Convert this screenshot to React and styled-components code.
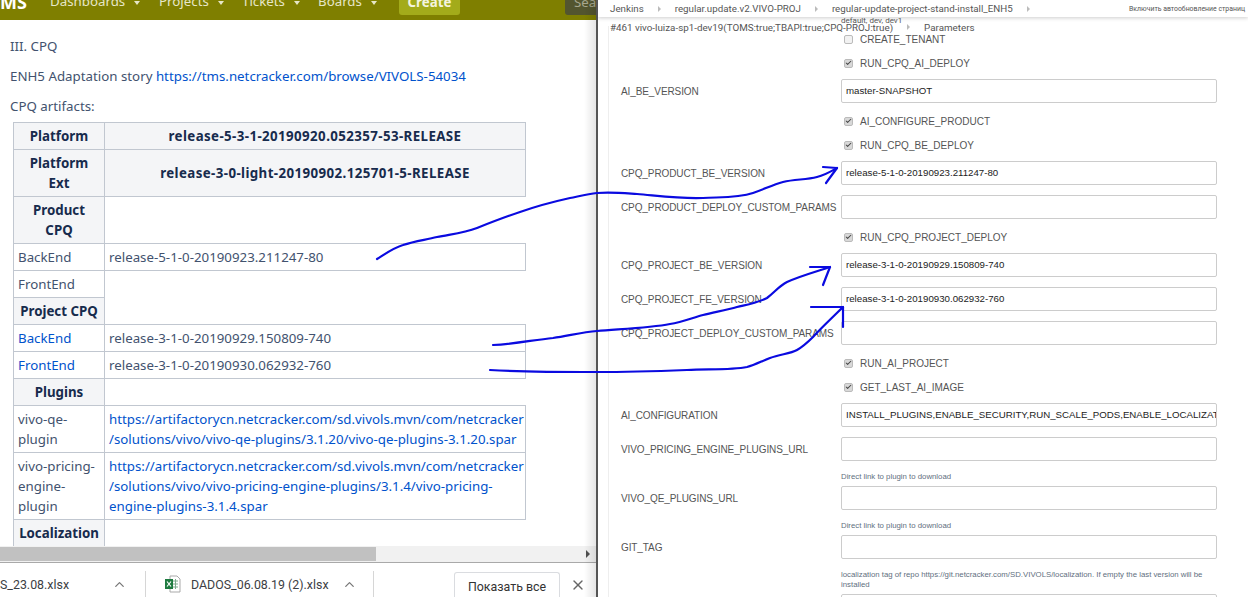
import React from 'react';
import styled, { createGlobalStyle } from 'styled-components';
import { ChevronUp, X, Check } from 'lucide-react';

const Global = createGlobalStyle`
  html, body { margin: 0; padding: 0; background: #fff; }
  body { width: 1248px; height: 597px; overflow: hidden; }
`;

const Page = styled.div`
  position: relative;
  display: flex;
  width: 1248px;
  height: 597px;
  overflow: hidden;
  font-family: "Noto Sans", "Open Sans", sans-serif;
`;

const LeftWindow = styled.div`
  display: flex;
  flex-direction: column;
  width: 596px;
  height: 597px;
  flex: none;
  position: relative;
`;

const Shade = styled.div`
  position: absolute;
  top: 0;
  right: 0;
  bottom: 0;
  width: 12px;
  background: linear-gradient(to right, rgba(0,0,0,0), rgba(0,0,0,0.1));
  pointer-events: none;
`;

const Header = styled.div`
  display: flex;
  align-items: flex-end;
  height: 20px;
  flex: none;
  background: #7f7f00;
  overflow: hidden;
  color: #e6e6c8;
  font-size: 13.3px;
`;

const Logo = styled.span`
  width: 50px;
  flex: none;
  height: 20px;
  line-height: 4px;
  font-weight: 700;
  font-size: 18px;
  color: #fff;
`;

const NavItem = styled.span`
  display: flex;
  align-items: center;
  gap: 9px;
  width: ${(p) => p.$w}px;
  flex: none;
  height: 20px;
  white-space: nowrap;
  & > span { position: relative; top: -9px; }
`;

const Caret = styled.i`
  position: relative;
  top: -7px;
  width: 0;
  height: 0;
  border-left: 3.5px solid transparent;
  border-right: 3.5px solid transparent;
  border-top: 4px solid #e6e6c8;
`;

const CreateButton = styled.span`
  width: 61px;
  flex: none;
  height: 15px;
  margin-bottom: 5px;
  background: #a3ab1a;
  border-radius: 0 0 3px 3px;
  color: #f4f4df;
  font-weight: 700;
  line-height: 4px;
  text-align: center;
`;

const SearchBox = styled.span`
  margin-left: 105px;
  width: 40px;
  flex: none;
  height: 15px;
  margin-bottom: 5px;
  background: #53552f;
  border-radius: 0 0 0 3px;
  color: #a7a78e;
  line-height: 4px;
  padding-left: 9px;
`;

const Content = styled.div`
  flex: 1;
  min-height: 0;
  overflow: hidden;
  padding: 16px 0 0 10px;
  font-size: 13.3px;
  line-height: 20px;
  color: #42526e;
`;

const Para = styled.p`
  margin: 0 0 10px;
  &:last-of-type { margin-bottom: 6px; }
`;

const Link = styled.a`
  color: #0052cc;
  text-decoration: none;
`;

const Sheet = styled.table`
  margin: 0 0 0 3px;
  width: 512px;
  border-collapse: collapse;
  table-layout: fixed;
  line-height: 20px;
  color: #42526e;
`;

const Head = styled.th`
  padding: 3px 4px;
  border: 1px solid #c1c7d0;
  background: #f4f5f7;
  color: #172b4d;
  font-weight: 700;
  text-align: center;
  letter-spacing: ${(p) => (p.$wide ? '0.4px' : '0')};
`;

const Cell = styled.td`
  padding: 3px 4px;
  border: 1px solid #c1c7d0;
`;

const Blank = styled.td`
  border: none;
  border-bottom: ${(p) => (p.$last ? '1px solid #c1c7d0' : 'none')};
`;

const ScrollBar = styled.div`
  display: flex;
  align-items: center;
  flex: none;
  height: 16px;
  background: #f1f1f1;
  border-bottom: 1px solid #a9a9a9;
`;

const Thumb = styled.div`
  width: 376px;
  height: 14px;
  background: #c1c1c1;
`;

const ScrollArrow = styled.i`
  margin-left: auto;
  margin-right: 6px;
  width: 0;
  height: 0;
  border-top: 4px solid transparent;
  border-bottom: 4px solid transparent;
  border-left: 4px solid #505050;
`;

const Downloads = styled.div`
  display: flex;
  align-items: flex-end;
  flex: none;
  height: 34px;
  background: #fff;
  font-family: "Roboto", "Noto Sans", sans-serif;
  font-size: 12.4px;
  color: #3c4043;
`;

const DownloadItem = styled.div`
  display: flex;
  align-items: center;
  width: ${(p) => p.$w}px;
  flex: none;
  height: 26px;
  padding-left: ${(p) => p.$pad}px;
  border-right: 1px solid #d6d6d6;
  box-sizing: border-box;
  white-space: nowrap;
  & > svg:last-child { margin-left: auto; margin-right: ${(p) => p.$tail}px; color: #777; }
`;

const FileName = styled.span`
  margin-left: ${(p) => p.$gap}px;
`;

const ShowAll = styled.div`
  margin-left: 80px;
  width: 106px;
  height: 25px;
  flex: none;
  box-sizing: border-box;
  border: 1px solid #dadce0;
  border-bottom: none;
  border-radius: 3px 3px 0 0;
  text-align: center;
  line-height: 27px;
  color: #333;
`;

const CloseSlot = styled.div`
  display: flex;
  align-items: center;
  margin-left: 10px;
  height: 25px;
  color: #666;
`;

const RightWindow = styled.div`
  position: relative;
  flex: 1;
  height: 597px;
  overflow: hidden;
  box-sizing: border-box;
  border-left: 2px solid #555;
  background: #fff;
  font-family: "Roboto", "Liberation Sans", sans-serif;
  color: #555;
`;

const TopCrumbs = styled.div`
  display: flex;
  align-items: center;
  height: 17px;
  padding-left: 12px;
  font-size: 9.75px;
  background: #fff;
  box-shadow: 0 1px 4px rgba(0, 0, 0, 0.2);
  position: relative;
  z-index: 1;
`;

const Crumb = styled.span`
  white-space: nowrap;
`;

const CrumbArrow = styled.i`
  flex: none;
  margin: 0 14px;
  width: 0;
  height: 0;
  border-top: 3px solid transparent;
  border-bottom: 3px solid transparent;
  border-left: 3px solid #bbb;
`;

const AutoRefresh = styled.span`
  margin-left: auto;
  margin-right: 3px;
  font-size: 6.9px;
  white-space: nowrap;
`;

const SubCrumbs = styled.div`
  display: flex;
  align-items: center;
  height: 12px;
  margin-top: 4px;
  padding-left: 12px;
  font-size: 9.8px;
`;

const Choices = styled.span`
  position: absolute;
  top: 16px;
  left: 243px;
  z-index: 2;
  font-size: 8px;
`;

const Form = styled.div`
  display: flex;
  flex-direction: column;
  margin: -7px 0 0 10px;
  padding-left: 12px;
  border-left: 1px solid #eee;
  height: 590px;
  font-family: "Liberation Sans", Arial, sans-serif;
  font-size: 10px;
`;

const CheckRow = styled.div`
  display: flex;
  align-items: center;
  flex: none;
  gap: 7px;
  height: 24px;
  box-sizing: border-box;
  padding: 2px 0 0 223px;
`;

const Box = styled.span`
  display: flex;
  align-items: center;
  justify-content: center;
  box-sizing: border-box;
  width: 9px;
  height: 9px;
  border: 1px solid #bbb;
  border-radius: 2px;
  background: ${(p) => (p.$on ? '#d8d8d8' : '#f2f2f2')};
  color: #444;
`;

const FieldRow = styled.div`
  display: flex;
  align-items: center;
  flex: none;
  height: 24px;
  ${CheckRow} + & { margin-top: 5px; }
  & + & { margin-top: 10px; }
  & + ${CheckRow} { margin-top: 5px; }
`;

const FieldLabel = styled.span`
  width: 220px;
  flex: none;
  white-space: nowrap;
  letter-spacing: -0.1px;
`;

const Field = styled.div`
  box-sizing: border-box;
  width: 376px;
  height: 24px;
  flex: none;
  padding: 0 4px;
  border: 1px solid #ccc;
  border-radius: 2px;
  overflow: hidden;
  white-space: nowrap;
  line-height: 22px;
  font-size: 9.7px;
  color: #222;
`;

const Help = styled.div`
  flex: none;
  width: 376px;
  margin: 11px 0 4px 220px;
  font-size: 7.8px;
  line-height: 10px;
  color: #5f6f80;
  & + ${FieldRow} { margin-top: 0; }
`;

const Ink = styled.svg`
  position: absolute;
  top: 0;
  left: 0;
  pointer-events: none;
  z-index: 3;
`;

function ExcelIcon() {
  return (
    <svg width="16" height="18" viewBox="0 0 16 18">
      <path d="M5 1h7l3 3v13H5z" fill="#fff" stroke="#a9a9a9" />
      <path d="M8 6h5M8 9h5M8 12h5M10.5 4v10" stroke="#7ba98c" />
      <rect x="0" y="4" width="8" height="10" fill="#1d7a3f" />
      <path d="M2 6.5l4 5M6 6.5l-4 5" stroke="#fff" strokeWidth="1.2" />
    </svg>
  );
}

function Checked({ on, children }) {
  return (
    <CheckRow>
      <Box $on={on}>{on && <Check size={8} strokeWidth={3.5} />}</Box>
      {children}
    </CheckRow>
  );
}

function Input({ label, value }) {
  return (
    <FieldRow>
      <FieldLabel>{label}</FieldLabel>
      <Field>{value}</Field>
    </FieldRow>
  );
}

export default function App() {
  return (
    <Page>
      <Global />
      <LeftWindow>
        <Header>
          <Logo>MS</Logo>
          <NavItem $w={109}><span>Dashboards</span><Caret /></NavItem>
          <NavItem $w={83}><span>Projects</span><Caret /></NavItem>
          <NavItem $w={76}><span>Tickets</span><Caret /></NavItem>
          <NavItem $w={81}><span>Boards</span><Caret /></NavItem>
          <CreateButton>Create</CreateButton>
          <SearchBox>Sea</SearchBox>
        </Header>
        <Content>
          <Para>III. CPQ</Para>
          <Para>ENH5 Adaptation story <Link>https://tms.netcracker.com/browse/VIVOLS-54034</Link></Para>
          <Para>CPQ artifacts:</Para>
          <Sheet>
            <colgroup>
              <col width="91" />
              <col width="421" />
            </colgroup>
            <tbody>
              <tr><Head>Platform</Head><Head $wide>release-5-3-1-20190920.052357-53-RELEASE</Head></tr>
              <tr><Head>Platform Ext</Head><Head $wide>release-3-0-light-20190902.125701-5-RELEASE</Head></tr>
              <tr><Head>Product CPQ</Head><Blank /></tr>
              <tr><Cell>BackEnd</Cell><Cell>release-5-1-0-20190923.211247-80</Cell></tr>
              <tr><Cell>FrontEnd</Cell><Blank /></tr>
              <tr><Head>Project CPQ</Head><Blank /></tr>
              <tr><Cell><Link>BackEnd</Link></Cell><Cell>release-3-1-0-20190929.150809-740</Cell></tr>
              <tr><Cell><Link>FrontEnd</Link></Cell><Cell>release-3-1-0-20190930.062932-760</Cell></tr>
              <tr><Head>Plugins</Head><Blank /></tr>
              <tr>
                <Cell>vivo-qe-plugin</Cell>
                <Cell>
                  <Link>https://artifactorycn.netcracker.com/sd.vivols.mvn/com/netcracker<br />/solutions/vivo/vivo-qe-plugins/3.1.20/vivo-qe-plugins-3.1.20.spar</Link>
                </Cell>
              </tr>
              <tr>
                <Cell>vivo-pricing-engine-plugin</Cell>
                <Cell>
                  <Link>https://artifactorycn.netcracker.com/sd.vivols.mvn/com/netcracker<br />/solutions/vivo/vivo-pricing-engine-plugins/3.1.4/vivo-pricing-<br />engine-plugins-3.1.4.spar</Link>
                </Cell>
              </tr>
              <tr><Head>Localization</Head><Blank $last /></tr>
            </tbody>
          </Sheet>
        </Content>
        <ScrollBar>
          <Thumb />
          <ScrollArrow />
        </ScrollBar>
        <Downloads>
          <DownloadItem $w={146} $pad={0} $tail={18}>
            <FileName $gap={0}>S_23.08.xlsx</FileName>
            <ChevronUp size={15} />
          </DownloadItem>
          <DownloadItem $w={228} $pad={19} $tail={16}>
            <ExcelIcon />
            <FileName $gap={10}>DADOS_06.08.19 (2).xlsx</FileName>
            <ChevronUp size={15} />
          </DownloadItem>
          <ShowAll>Показать все</ShowAll>
          <CloseSlot><X size={16} /></CloseSlot>
        </Downloads>
        <Shade />
      </LeftWindow>
      <RightWindow>
        <TopCrumbs>
          <Crumb>Jenkins</Crumb>
          <CrumbArrow />
          <Crumb>regular.update.v2.VIVO-PROJ</Crumb>
          <CrumbArrow />
          <Crumb>regular-update-project-stand-install_ENH5</Crumb>
          <CrumbArrow />
          <AutoRefresh>Включить автообновление страниц</AutoRefresh>
        </TopCrumbs>
        <SubCrumbs>
          <Crumb>#461 vivo-luiza-sp1-dev19(TOMS:true;TBAPI:true;CPQ-PROJ:true)</Crumb>
          <CrumbArrow />
          <Crumb>Parameters</Crumb>
        </SubCrumbs>
        <Choices>default, dev, dev1</Choices>
        <Form>
          <Checked>CREATE_TENANT</Checked>
          <Checked on>RUN_CPQ_AI_DEPLOY</Checked>
          <Input label="AI_BE_VERSION" value="master-SNAPSHOT" />
          <Checked on>AI_CONFIGURE_PRODUCT</Checked>
          <Checked on>RUN_CPQ_BE_DEPLOY</Checked>
          <Input label="CPQ_PRODUCT_BE_VERSION" value="release-5-1-0-20190923.211247-80" />
          <Input label="CPQ_PRODUCT_DEPLOY_CUSTOM_PARAMS" />
          <Checked on>RUN_CPQ_PROJECT_DEPLOY</Checked>
          <Input label="CPQ_PROJECT_BE_VERSION" value="release-3-1-0-20190929.150809-740" />
          <Input label="CPQ_PROJECT_FE_VERSION" value="release-3-1-0-20190930.062932-760" />
          <Input label="CPQ_PROJECT_DEPLOY_CUSTOM_PARAMS" />
          <Checked on>RUN_AI_PROJECT</Checked>
          <Checked on>GET_LAST_AI_IMAGE</Checked>
          <Input label="AI_CONFIGURATION" value="INSTALL_PLUGINS,ENABLE_SECURITY,RUN_SCALE_PODS,ENABLE_LOCALIZATION" />
          <Input label="VIVO_PRICING_ENGINE_PLUGINS_URL" />
          <Help>Direct link to plugin to download</Help>
          <Input label="VIVO_QE_PLUGINS_URL" />
          <Help>Direct link to plugin to download</Help>
          <Input label="GIT_TAG" />
          <Help>localization tag of repo https://git.netcracker.com/SD.VIVOLS/localization. If empty the last version will be installed</Help>
          <Input label="" />
        </Form>
      </RightWindow>
      <Ink width="1248" height="597" fill="none" stroke="#0a0ae0" strokeWidth="2.2" strokeLinecap="round" strokeLinejoin="round">
        <path d="M377 259C385 254 393 248 403 245C415 241 425 240 437 237C452 234 464 233 477 228C492 222 505 217 520 212C537 206 552 202 570 198C580 196 588 194 597 193C612 192 622 193 637 194C660 196 682 199 703 198C722 197 738 198 753 193C765 189 772 185 783 182C795 179 806 180 817 177C825 175 830 172 837 168" />
        <path d="M823 167L837 168L826 183" />
        <path d="M493 345C515 344 533 340 553 338C568 336 582 332 597 331C620 329 650 328 670 324C682 322 692 318 703 315C715 312 727 310 737 307C750 304 757 303 767 298C775 292 779 286 787 282C800 276 815 272 830 267" />
        <path d="M810 267L830 267L823 285" />
        <path d="M490 370C525 372 560 372 597 372C630 372 660 371 687 370C710 369 732 370 747 367C755 365 762 361 770 358C780 354 790 354 797 350C804 346 808 342 813 337C822 327 833 317 843 307" />
        <path d="M811 307L843 307L843 327" />
      </Ink>
    </Page>
  );
}
